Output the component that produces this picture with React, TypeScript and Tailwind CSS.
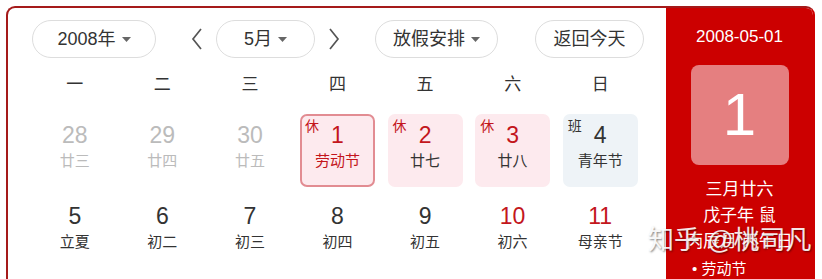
import React from "react";

type Cell = {
  d: number;
  l: string;
  prev?: boolean;
  red?: boolean;
  tag?: "休" | "班";
  kind?: "sel" | "rest" | "work";
  lunarRed?: boolean;
};

const rows: Cell[][] = [
  [
    { d: 28, l: "廿三", prev: true },
    { d: 29, l: "廿四", prev: true },
    { d: 30, l: "廿五", prev: true },
    { d: 1, l: "劳动节", red: true, tag: "休", kind: "sel", lunarRed: true },
    { d: 2, l: "廿七", red: true, tag: "休", kind: "rest" },
    { d: 3, l: "廿八", red: true, tag: "休", kind: "rest" },
    { d: 4, l: "青年节", tag: "班", kind: "work" },
  ],
  [
    { d: 5, l: "立夏" },
    { d: 6, l: "初二" },
    { d: 7, l: "初三" },
    { d: 8, l: "初四" },
    { d: 9, l: "初五" },
    { d: 10, l: "初六", red: true },
    { d: 11, l: "母亲节", red: true },
  ],
];

const weekdays = ["一", "二", "三", "四", "五", "六", "日"];

function Caret() {
  return (
    <svg width="9" height="6" viewBox="0 0 9 6" className="ml-[6px] mt-[2px]">
      <path d="M0 0 L9 0 L4.5 5 Z" fill="#666" />
    </svg>
  );
}

function Chevron({ dir }: { dir: "l" | "r" }) {
  return (
    <svg width="14" height="24" viewBox="0 0 14 24">
      <path
        d={dir === "l" ? "M11 2 L3 12 L11 22" : "M3 2 L11 12 L3 22"}
        fill="none"
        stroke="#555"
        strokeWidth="1.7"
      />
    </svg>
  );
}

function DayCell({ c }: { c: Cell }) {
  let box = "";
  if (c.kind === "sel") box = "bg-[#fdeaee] border-2 border-[#e28c92]";
  else if (c.kind === "rest") box = "bg-[#fdeaee] border-2 border-transparent";
  else if (c.kind === "work") box = "bg-[#eef3f7] border-2 border-transparent";
  else box = "border-2 border-transparent";
  const numColor = c.prev ? "text-[#bbbbbb]" : c.red ? "text-[#c3161c]" : "text-[#333333]";
  const lunarColor = c.prev ? "text-[#bbbbbb]" : c.lunarRed ? "text-[#c3161c]" : "text-[#333333]";
  return (
    <div className={`relative w-[75px] h-[73px] rounded-[7px] flex flex-col items-center pt-[6px] ${box}`}>
      {c.tag && (
        <span
          className={`absolute left-[3px] top-[2px] text-[14px] leading-[16px] ${
            c.tag === "休" ? "text-[#c3161c]" : "text-[#333333]"
          }`}
        >
          {c.tag}
        </span>
      )}
      <span className={`text-[23px] leading-[27px] ${numColor}`}>{c.d}</span>
      <span className={`mt-[1px] text-[15px] leading-[22px] ${lunarColor}`}>{c.l}</span>
    </div>
  );
}

export default function App() {
  return (
    <div
      className="relative w-[822px] h-[279px] overflow-hidden bg-white"
      style={{ fontFamily: '"Liberation Sans", "Noto Sans CJK SC", sans-serif' }}
    >
      <div className="ml-[6px] mt-[6px] w-[809px] h-[320px] flex rounded-[9px] border-2 border-[#a51a1a] border-r-[#cc0000] overflow-hidden">
        {/* left */}
        <div className="w-[658px] flex flex-col">
          <div className="flex items-center mt-[12px] pl-[24px] h-[38px]">
            <div className="w-[124px] h-[38px] rounded-full border border-[#dddddd] flex items-center justify-center text-[18px] text-[#333]">
              2008年
              <Caret />
            </div>
            <div className="ml-[34px] w-[14px] flex items-center">
              <Chevron dir="l" />
            </div>
            <div className="ml-[12px] w-[99px] h-[38px] rounded-full border border-[#dddddd] flex items-center justify-center text-[18px] text-[#333]">
              5月
              <Caret />
            </div>
            <div className="ml-[12px] w-[14px] flex items-center">
              <Chevron dir="r" />
            </div>
            <div className="ml-[34px] w-[123px] h-[38px] rounded-full border border-[#dddddd] flex items-center justify-center text-[18px] text-[#333]">
              放假安排
              <Caret />
            </div>
            <div className="ml-[37px] w-[109px] h-[38px] rounded-full border border-[#dddddd] flex items-center justify-center text-[18px] text-[#333]">
              返回今天
            </div>
          </div>
          <div className="grid grid-cols-7 pl-[23px] pr-[22px] mt-[12px] h-[30px] items-center">
            {weekdays.map((w) => (
              <div key={w} className="text-center text-[17px] text-[#333]">
                {w}
              </div>
            ))}
          </div>
          <div className="grid grid-cols-7 pl-[23px] pr-[22px] mt-[14px] gap-y-[8px] justify-items-center">
            {rows.flat().map((c, i) => (
              <DayCell key={i} c={c} />
            ))}
          </div>
        </div>
        {/* right */}
        <div className="flex-1 bg-[#cc0000] flex flex-col items-center text-white">
          <div className="mt-[18px] text-[17px] leading-[22px]">2008-05-01</div>
          <div className="mt-[17px] w-[98px] h-[100px] rounded-[8px] bg-[#e57f80] flex items-center justify-center text-[60px] leading-none">
            1
          </div>
          <div className="mt-[12px] text-[17px] leading-[26px]">三月廿六</div>
          <div className="text-[17px] leading-[26px]">戊子年 鼠</div>
          <div className="text-[17px] leading-[26px]">丙辰月 丙午日</div>
          <div className="self-start ml-[26px] text-[15px] leading-[28px]">• 劳动节</div>
        </div>
      </div>
      {/* watermark */}
      <div
        className="absolute left-[648px] top-[225px] text-[26px] leading-[30px] text-white/90 whitespace-nowrap"
        style={{ textShadow: "1px 1px 2px rgba(0,0,0,0.5)" }}
      >
        知乎 @桃司凡
      </div>
    </div>
  );
}
